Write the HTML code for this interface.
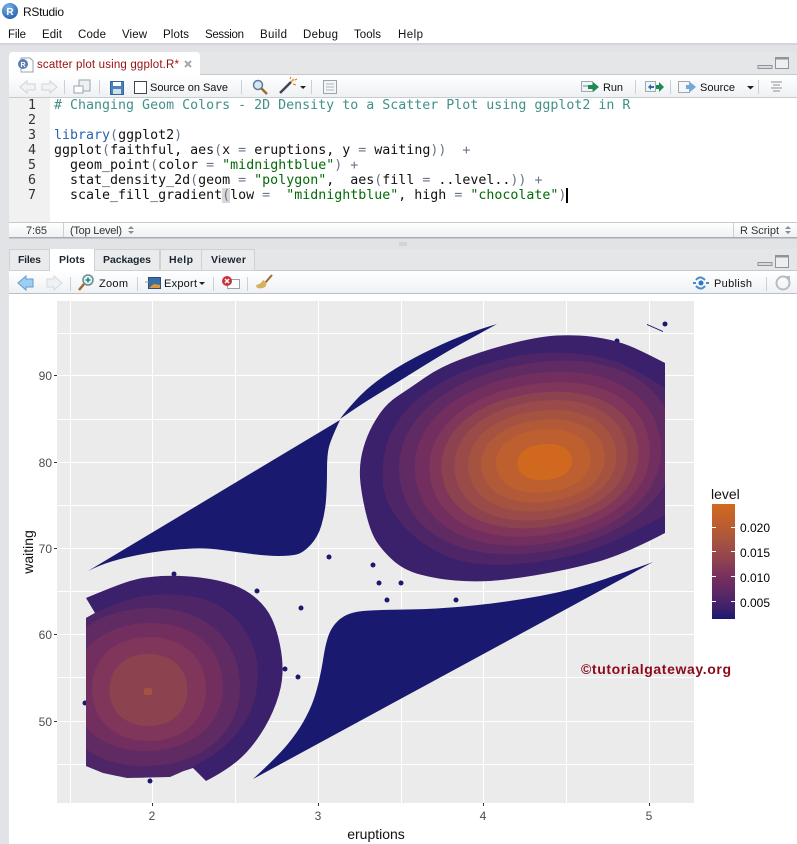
<!DOCTYPE html>
<html><head><meta charset="utf-8"><title>RStudio</title>
<style>
html,body{margin:0;padding:0;background:#fff;width:797px;height:844px;overflow:hidden}
svg{display:block}
text{font-family:"Liberation Sans",sans-serif;white-space:pre}
.m{font-size:11.5px;fill:#111}
.t{font-size:11px;fill:#111}
.b{font-size:10.5px;font-weight:bold;fill:#1c2530}
.c{font-family:"DejaVu Sans Mono","Liberation Mono",monospace;font-size:13.3px;fill:#111}
.ax{font-size:12px;fill:#4d4d4d}
.lg{font-size:12px;fill:#000}
.sep{stroke:#ccd0d4;stroke-width:1}
</style></head><body>
<svg xmlns="http://www.w3.org/2000/svg" width="797" height="844" viewBox="0 0 797 844">
<defs>
<linearGradient id="tb" x1="0" y1="0" x2="0" y2="1"><stop offset="0" stop-color="#fff"/><stop offset="1" stop-color="#eef1f4"/></linearGradient>
<linearGradient id="bar" x1="0" y1="1" x2="0" y2="0">
<stop offset="0" stop-color="#191970"/><stop offset=".085" stop-color="#3b206b"/><stop offset=".17" stop-color="#4e2567"/><stop offset=".25" stop-color="#602a63"/><stop offset=".335" stop-color="#712e5f"/><stop offset=".42" stop-color="#80355a"/><stop offset=".5" stop-color="#8d4250"/><stop offset=".585" stop-color="#9a4a49"/><stop offset=".67" stop-color="#a65240"/><stop offset=".75" stop-color="#b25a37"/><stop offset=".835" stop-color="#bd5f2e"/><stop offset=".92" stop-color="#c86426"/><stop offset="1" stop-color="#d2691e"/>
</linearGradient>
<radialGradient id="rb" cx=".4" cy=".3" r=".8"><stop offset="0" stop-color="#7fb4e8"/><stop offset="1" stop-color="#1a5ba8"/></radialGradient>
<clipPath id="cr"><rect x="57" y="301" width="608" height="502"/></clipPath>
<clipPath id="cl"><rect x="86" y="301" width="608" height="502"/></clipPath>
<path id="sq" d="M-1 0C-1 -.6 -.6 -1 0 -1S1 -.6 1 0 .6 1 0 1 -1 .6 -1 0Z"/>
</defs>

<!-- chrome backgrounds -->
<rect width="797" height="844" fill="#fff"/>
<rect y="43" width="797" height="801" fill="#e2e3e6"/>
<rect y="43" width="797" height="2" fill="#d4d5d8"/>
<!-- title bar -->
<circle cx="10" cy="11" r="8" fill="url(#rb)"/>
<text x="10" y="15" text-anchor="middle" style="font-size:10px;font-weight:bold;fill:#fff">R</text>
<text x="23" y="16" style="font-size:12px;fill:#111" textLength="41">RStudio</text>
<text x="8" y="38" class="m" textLength="18">File</text>
<text x="42" y="38" class="m" textLength="20">Edit</text>
<text x="78" y="38" class="m" textLength="28">Code</text>
<text x="122" y="38" class="m" textLength="25">View</text>
<text x="163" y="38" class="m" textLength="26">Plots</text>
<text x="205" y="38" class="m" textLength="39">Session</text>
<text x="260" y="38" class="m" textLength="27">Build</text>
<text x="303" y="38" class="m" textLength="35">Debug</text>
<text x="354" y="38" class="m" textLength="27">Tools</text>
<text x="398" y="38" class="m" textLength="25">Help</text>

<!-- source pane -->
<rect x="9" y="52" width="788" height="185" fill="#fff"/>
<rect x="9" y="52" width="788" height="23" fill="#e5e6e8"/>
<rect x="9" y="74" width="788" height="1" fill="#c4c8cc"/>
<path d="M9 75V56q0-4 4-4H196q4 0 4 4V75Z" fill="#fff"/>
<path d="M21 58h9l3 3v11H21z" fill="#fff" stroke="#9aa3ad"/>
<circle cx="23" cy="64" r="5" fill="#5b7db5"/>
<text x="23" y="67" text-anchor="middle" style="font-size:7px;font-weight:bold;fill:#fff">R</text>
<text x="37" y="68" style="font-size:11.5px;fill:#990f0f" textLength="142">scatter plot using ggplot.R*</text>
<path d="M185 61l6 6M191 61l-6 6" stroke="#a8a8a8" stroke-width="2"/>
<path d="M758 65.500h14v3h-14z" fill="#d8dadd" stroke="#8f949a" stroke-width="1"/>
<rect x="775.500" y="57.500" width="13" height="11" fill="#eceef0" stroke="#8f949a"/><rect x="775.500" y="57.500" width="13" height="2" fill="#8f949a"/>
<rect x="9" y="75" width="788" height="22" fill="url(#tb)"/>
<rect x="9" y="97" width="788" height="1" fill="#c8ccd0"/>
<path d="M20 87l7-6v3h8v6h-8v3z" fill="#f2f3f4" stroke="#d0d3d6"/>
<path d="M57 87l-7-6v3h-8v6h8v3z" fill="#f2f3f4" stroke="#d0d3d6"/>
<line x1="64.500" y1="80" x2="64.500" y2="94" class="sep"/>
<rect x="79" y="80" width="11" height="11" fill="#eef1f4" stroke="#9aa3ad"/><rect x="74" y="86" width="9" height="7" fill="#fff" stroke="#9aa3ad"/>
<line x1="99.500" y1="80" x2="99.500" y2="94" class="sep"/>
<rect x="110.500" y="81.500" width="13" height="13" fill="#4d82b8" stroke="#33669a"/><rect x="113" y="82" width="8" height="4" fill="#fff"/><rect x="113" y="89" width="8" height="5" fill="#cfe0ee"/>
<rect x="134.500" y="81.500" width="12" height="12" fill="#fff" stroke="#444"/>
<text x="150" y="91" class="t" textLength="78">Source on Save</text>
<line x1="241.500" y1="80" x2="241.500" y2="94" class="sep"/>
<circle cx="258" cy="85" r="4.500" fill="#d6e6f4" stroke="#5e7d99" stroke-width="1.500"/><path d="M261 88l6 6" stroke="#a06a2c" stroke-width="2.500"/>
<path d="M280 93l11-11" stroke="#3c4652" stroke-width="2.500"/><path d="M291 82l3-3" stroke="#e8b04c" stroke-width="2"/><path d="M293 84l3 1M290 79l1-2M295 80l2-1" stroke="#e07030"/>
<path d="M300 86h6l-3 3z" fill="#222"/>
<line x1="311.500" y1="80" x2="311.500" y2="94" class="sep"/>
<rect x="323.500" y="80.500" width="13" height="13" fill="#f4f5f6" stroke="#9aa3ad"/><path d="M326 84h8M326 87h8M326 90h8" stroke="#b0b6bc"/>
<rect x="581.500" y="81.500" width="11" height="10" fill="#f2f4f6" stroke="#a0a8b0"/><path d="M583 86h5" stroke="#a8c0d8" stroke-width="2"/>
<path d="M588 85h5v-3l6 5-6 5v-3h-5z" fill="#1d8a50"/>
<text x="603" y="91" class="t" textLength="20">Run</text>
<line x1="635.500" y1="80" x2="635.500" y2="94" class="sep"/>
<rect x="645.500" y="81.500" width="10" height="10" fill="#f2f4f6" stroke="#a0a8b0"/><path d="M648 87l3-3v2h3v2h-3v2z" fill="#2a6cb8"/>
<path d="M656 85h3v-3l5 5-5 5v-3h-3z" fill="#1d8a50"/>
<line x1="670.500" y1="80" x2="670.500" y2="94" class="sep"/>
<rect x="678.500" y="81.500" width="11" height="11" fill="#f6f7f8" stroke="#a0a8b0"/>
<path d="M686 85h4v-3l6 5-6 5v-3h-4z" fill="#6fa8dc"/>
<text x="700" y="91" class="t" textLength="35">Source</text>
<path d="M747 86h7l-3.500 3.500z" fill="#222"/>
<line x1="758.500" y1="80" x2="758.500" y2="94" class="sep"/>
<path d="M771 82h11M773 85h7M771 88h11M773 91h7" stroke="#8b9096"/>

<!-- editor -->
<rect x="9" y="98" width="41" height="124" fill="#f1f1f1"/>
<text class="c" x="36" y="109" text-anchor="end" style="fill:#333">1</text>
<text class="c" x="36" y="124" text-anchor="end" style="fill:#333">2</text>
<text class="c" x="36" y="139" text-anchor="end" style="fill:#333">3</text>
<text class="c" x="36" y="154" text-anchor="end" style="fill:#333">4</text>
<text class="c" x="36" y="169" text-anchor="end" style="fill:#333">5</text>
<text class="c" x="36" y="184" text-anchor="end" style="fill:#333">6</text>
<text class="c" x="36" y="199" text-anchor="end" style="fill:#333">7</text>
<rect x="222" y="188" width="8" height="15" fill="#d8d8d8"/>
<text class="c" x="54" y="109" style="fill:#41908a" xml:space="preserve"># Changing Geom Colors - 2D Density to a Scatter Plot using ggplot2 in R</text>
<text class="c" x="54" y="139" xml:space="preserve"><tspan fill="#2a62b0">library</tspan><tspan fill="#687687">(</tspan>ggplot2<tspan fill="#687687">)</tspan></text>
<text class="c" x="54" y="154" xml:space="preserve">ggplot<tspan fill="#687687">(</tspan>faithful, aes<tspan fill="#687687">(</tspan>x <tspan fill="#687687">=</tspan> eruptions, y <tspan fill="#687687">=</tspan> waiting<tspan fill="#687687">))</tspan>  <tspan fill="#687687">+</tspan></text>
<text class="c" x="54" y="169" xml:space="preserve">  geom_point<tspan fill="#687687">(</tspan>color <tspan fill="#687687">=</tspan> <tspan fill="#036a07">"midnightblue"</tspan><tspan fill="#687687">)</tspan> <tspan fill="#687687">+</tspan></text>
<text class="c" x="54" y="184" xml:space="preserve">  stat_density_2d<tspan fill="#687687">(</tspan>geom <tspan fill="#687687">=</tspan> <tspan fill="#036a07">"polygon"</tspan>,  aes<tspan fill="#687687">(</tspan>fill <tspan fill="#687687">=</tspan> ..level..<tspan fill="#687687">))</tspan> <tspan fill="#687687">+</tspan></text>
<text class="c" x="54" y="199" xml:space="preserve">  scale_fill_gradient<tspan fill="#687687">(</tspan>low <tspan fill="#687687">=</tspan>  <tspan fill="#036a07">"midnightblue"</tspan>, high <tspan fill="#687687">=</tspan> <tspan fill="#036a07">"chocolate"</tspan><tspan fill="#687687">)</tspan></text>
<rect x="566" y="188" width="2" height="15" fill="#000"/>

<!-- status bar -->
<rect x="9" y="222" width="788" height="15" fill="url(#tb)"/>
<rect x="9" y="222" width="788" height="1" fill="#c8ccd0"/>
<rect x="9" y="237" width="788" height="1.500" fill="#a9acb0"/>
<line x1="63.500" y1="223" x2="63.500" y2="237" class="sep"/>
<line x1="733.500" y1="223" x2="733.500" y2="237" class="sep"/>
<text x="26" y="234" style="font-size:11px;fill:#333" textLength="21">7:65</text>
<text x="70" y="234" style="font-size:11px;fill:#333" textLength="52">(Top Level)</text>
<path d="M128 229l3-3 3 3zM128 231l3 3 3-3z" fill="#8a8f94"/>
<text x="740" y="234" style="font-size:11px;fill:#333" textLength="39">R Script</text>
<path d="M785 229l3-3 3 3zM785 231l3 3 3-3z" fill="#8a8f94"/>
<path d="M399 243h8M399 245h8" stroke="#c2c4c7"/>

<!-- plots pane -->
<rect x="9" y="249" width="788" height="595" fill="#fff"/>
<rect x="9" y="249" width="788" height="22" fill="#e5e6e8"/>
<rect x="9" y="270" width="788" height="1" fill="#c4c8cc"/>
<rect x="9.500" y="249.500" width="40" height="21" fill="#eaebec" stroke="#cfd2d5"/>
<rect x="50" y="249" width="44" height="22" fill="#fff"/>
<rect x="94.500" y="249.500" width="65" height="21" fill="#eaebec" stroke="#cfd2d5"/>
<rect x="160.500" y="249.500" width="41" height="21" fill="#eaebec" stroke="#cfd2d5"/>
<rect x="201.500" y="249.500" width="53" height="21" fill="#eaebec" stroke="#cfd2d5"/>
<text x="18" y="263" class="b" textLength="23">Files</text>
<text x="59" y="263" class="b" textLength="26">Plots</text>
<text x="103" y="263" class="b" textLength="48">Packages</text>
<text x="169" y="263" class="b" textLength="24">Help</text>
<text x="211" y="263" class="b" textLength="35">Viewer</text>
<path d="M758 262.500h14v3h-14z" fill="#d8dadd" stroke="#8f949a"/>
<rect x="775.500" y="255.500" width="13" height="12" fill="#eceef0" stroke="#8f949a"/><rect x="775.500" y="255.500" width="13" height="2" fill="#8f949a"/>
<rect x="9" y="271" width="788" height="22" fill="url(#tb)"/>
<rect x="9" y="293" width="788" height="1" fill="#bcc0c4"/>
<path d="M18 283l8-7v3h7v8h-7v3z" fill="#9fcdf0" stroke="#5f9fd0"/>
<path d="M62 283l-8-7v3h-7v8h7v3z" fill="#eef2f5" stroke="#d4dade"/>
<line x1="70.500" y1="277" x2="70.500" y2="291" class="sep"/>
<circle cx="88" cy="280" r="5" fill="#e4f2ee" stroke="#6b8a99" stroke-width="1.500"/><path d="M85.500 280h5M88 277.500v5" stroke="#128a7a" stroke-width="1.500"/><path d="M84 284l-5 6" stroke="#a06a2c" stroke-width="2.500"/>
<text x="99" y="287" class="t" textLength="29">Zoom</text>
<line x1="137.500" y1="277" x2="137.500" y2="291" class="sep"/>
<rect x="148.500" y="277.500" width="12" height="11" fill="#3a6ea8" stroke="#2b4d78"/><path d="M149 288l5-4 6 1v3z" fill="#d89a3c"/>
<path d="M145 282h4" stroke="#999"/>
<text x="164" y="287" class="t" textLength="33">Export</text>
<path d="M199 282h6l-3 3z" fill="#222"/>
<line x1="213.500" y1="277" x2="213.500" y2="291" class="sep"/>
<rect x="227.500" y="279.500" width="12" height="9" fill="#fff" stroke="#9aa3ad"/>
<circle cx="227" cy="281" r="5" fill="#c8323a"/><path d="M225 279l4 4M229 279l-4 4" stroke="#fff" stroke-width="1.500"/>
<line x1="247.500" y1="277" x2="247.500" y2="291" class="sep"/>
<path d="M265 283l7-8" stroke="#9a6a30" stroke-width="2"/><path d="M257 288q5 1 8-1 2-2 1-5l-3-2q-2 4-7 5z" fill="#d8b060"/>
<g transform="translate(-1,0)"><path d="M697 280q4-5 9 0M706 286q-4 5-9 0" fill="none" stroke="#4a8ac8" stroke-width="2"/><circle cx="702" cy="283" r="2.500" fill="#2a78c8"/><path d="M694 283h3M707 283h3" stroke="#4a8ac8" stroke-width="2"/></g>
<text x="714" y="287" class="t" textLength="38">Publish</text>
<line x1="766.500" y1="277" x2="766.500" y2="291" class="sep"/>
<circle cx="783" cy="283" r="6.500" fill="none" stroke="#b8bcc0" stroke-width="2"/><path d="M785 276h5v5z" fill="#b8bcc0"/>

<!-- ggplot panel -->
<rect x="57" y="301" width="637" height="502" fill="#ebebeb"/>
<g stroke="#fff" stroke-width="1">
<path d="M70.500 301V803M152.500 301V803M235.500 301V803M318.500 301V803M401.500 301V803M483.500 301V803M566.500 301V803M649.500 301V803"/>
<path d="M57 333.500H694M57 375.500H694M57 419.500H694M57 462.500H694M57 505.500H694M57 548.500H694M57 591.500H694M57 634.500H694M57 677.500H694M57 721.500H694M57 764.500H694"/>
</g>
<!-- points -->
<g fill="#191970">
<circle cx="329" cy="557" r="2.500"/><circle cx="373" cy="565" r="2.500"/><circle cx="379" cy="583" r="2.500"/><circle cx="401" cy="583" r="2.500"/><circle cx="387" cy="600" r="2.500"/><circle cx="456" cy="600" r="2.500"/><circle cx="257" cy="591" r="2.500"/><circle cx="301" cy="608" r="2.500"/><circle cx="285" cy="669" r="2.500"/><circle cx="298" cy="677" r="2.500"/><circle cx="174" cy="574" r="2.500"/><circle cx="85" cy="703" r="2.500"/><circle cx="150" cy="781" r="2.500"/><circle cx="665" cy="324" r="2.500"/><circle cx="617" cy="341" r="2.500"/>
</g>
<!-- midnight shapes -->
<g fill="#191970">
<path d="M88 571L340 420Q332 437 329.500 445Q327 453 327 470Q327 487 326 500Q325 513 321.500 525Q318 537 310.500 545Q303 553 296.500 554.500Q290 556 278.500 556Q267 556 252 554Q237 552 222 550Q207 548 193.500 548.500Q180 549 166.500 550.500Q153 552 138 555Q123 558 111.500 561.500Q100 565 88 571Z"/>
<path d="M340 419Q345 412 356 400Q367 388 382 377.500Q397 367 415 357.500Q433 348 453 339.500Q473 331 497 324Q468 340 450 350Q433 360 413 372.500Q393 385 376.500 395Q360 405 340 419Z"/>
<polygon points="647,324 663,331 663,332 647,325"/>
<path d="M253 779L653 562Q637 568 605 579Q573 590 540 596Q507 602 473.500 605.500Q440 609 406.500 609.500Q373 610 363 611Q353 612 346.500 615Q340 618 335 624Q330 630 327.500 638.500Q325 647 323.500 657Q322 667 319.500 678.500Q317 690 313.500 700Q310 710 303.500 721.500Q297 733 287 745Q277 757 253 779Z"/>
</g>
<!-- upper density -->
<g clip-path="url(#cr)">
<path fill="#3b206b" d="M665 363Q640 350 628.500 345.500Q617 341 603.500 338.500Q590 336 578.500 335.500Q567 335 557 335.500Q547 336 533.500 338.500Q520 341 501.500 346Q483 351 461.500 359Q440 367 425 377.500Q410 388 398.500 395.500Q387 403 379.500 414Q372 425 367.500 436Q363 447 361 458.500Q359 470 360.500 483.500Q362 497 366 513.500Q370 530 375 539Q380 548 391.500 559Q403 570 420 574.500Q437 579 455 580.500Q473 582 490 581Q507 580 537 575Q567 570 595 562.500Q623 555 665 533Z"/>
<path fill="#4e2567" d="M665 388Q640 372 623.500 364.500Q607 357 580 354Q553 351 530 354Q507 357 482 365Q457 373 437 385Q417 397 403.500 413.500Q390 430 386 446.500Q382 463 382.500 478Q383 493 389 505Q395 517 406 528.500Q417 540 432 549Q447 558 463.500 561.500Q480 565 496.500 565Q513 565 533 562.500Q553 560 580 553.500Q607 547 665 515Z"/>
<use href="#sq" transform="translate(537 457.500) rotate(-11) scale(139 94)" fill="#602a63"/>
<use href="#sq" transform="translate(538 458.700) rotate(-10) scale(124 85)" fill="#712e5f"/>
<use href="#sq" transform="translate(539.700 459.500) rotate(-10) scale(111 75.500)" fill="#80355a"/>
<use href="#sq" transform="translate(540 460) rotate(-9) scale(99 67)" fill="#8d4250"/>
<use href="#sq" transform="translate(541 460.300) rotate(-9) scale(87 59)" fill="#9a4a49"/>
<use href="#sq" transform="translate(542.200 460.700) rotate(-8) scale(74.500 50)" fill="#a65240"/>
<use href="#sq" transform="translate(543 461) rotate(-7) scale(62 41)" fill="#b25a37"/>
<use href="#sq" transform="translate(543.300 461) rotate(-6) scale(47.500 31.500)" fill="#bd5f2e"/>
<use href="#sq" transform="translate(544.700 462) rotate(-5) scale(27.500 18)" fill="#d0681f"/>
</g>
<!-- lower-left density -->
<path fill="#3b206b" d="M86 598L95 613 86 618V766Q103 773 115 775.500Q127 778 147 777.500Q167 777 193 768L206 781Q227 770 238.500 760Q250 750 260 735Q270 720 276 703.500Q282 687 282.500 673.500Q283 660 280 645Q277 630 272 619Q267 608 257 599Q247 590 233.500 585Q220 580 200 577.500Q180 575 161.500 576Q143 577 130 581Q117 585 86 598Z"/>
<path fill="#4e2567" d="M86 618L95 613Q127 598 147 595.500Q167 593 187 595.500Q207 598 222 607.500Q237 617 246 632Q255 647 257 662Q259 677 256 693.500Q253 710 243 725Q233 740 218 751.500Q203 763 170 777L127 778 103 773 86 766Z"/>
<g clip-path="url(#cl)">
<use href="#sq" transform="translate(148 687) rotate(-4) scale(92 79)" fill="#602a63"/>
<use href="#sq" transform="translate(148 687) rotate(-4) scale(75 64)" fill="#712e5f"/>
<use href="#sq" transform="translate(149 689) scale(57 52)" fill="#80355a"/>
<use href="#sq" transform="translate(148.500 690) scale(39 36)" fill="#8d4250"/>
</g>
<rect x="144" y="688" width="8" height="7" rx="2" fill="#a65240"/>

<!-- axes -->
<g stroke="#333" stroke-width="1">
<path d="M152.500 803v3M318.500 803v3M483.500 803v3M649.500 803v3M54 375.500h3M54 462.500h3M54 548.500h3M54 634.500h3M54 721.500h3"/>
</g>
<text class="ax" x="152" y="820" text-anchor="middle">2</text>
<text class="ax" x="318" y="820" text-anchor="middle">3</text>
<text class="ax" x="483" y="820" text-anchor="middle">4</text>
<text class="ax" x="649" y="820" text-anchor="middle">5</text>
<text class="ax" x="52" y="380" text-anchor="end">90</text>
<text class="ax" x="52" y="467" text-anchor="end">80</text>
<text class="ax" x="52" y="553" text-anchor="end">70</text>
<text class="ax" x="52" y="639" text-anchor="end">60</text>
<text class="ax" x="52" y="726" text-anchor="end">50</text>
<text x="376" y="839" text-anchor="middle" style="font-size:14px;fill:#111">eruptions</text>
<text transform="translate(33,552) rotate(-90)" text-anchor="middle" style="font-size:14px;fill:#111">waiting</text>

<!-- legend -->
<text x="711" y="499" style="font-size:14px;fill:#111">level</text>
<rect x="712" y="504" width="23" height="115" fill="url(#bar)"/>
<path d="M712 527.500h4M731 527.500h4M712 551.500h4M731 551.500h4M712 576.500h4M731 576.500h4M712 601.500h4M731 601.500h4" stroke="#fff"/>
<text x="740" y="532" class="lg">0.020</text>
<text x="740" y="557" class="lg">0.015</text>
<text x="740" y="582" class="lg">0.010</text>
<text x="740" y="607" class="lg">0.005</text>

<!-- watermark -->
<text x="581" y="674" textLength="150" style="font-size:14px;font-weight:bold;fill:#8b0a1a">©tutorialgateway.org</text>
</svg>
</body></html>
